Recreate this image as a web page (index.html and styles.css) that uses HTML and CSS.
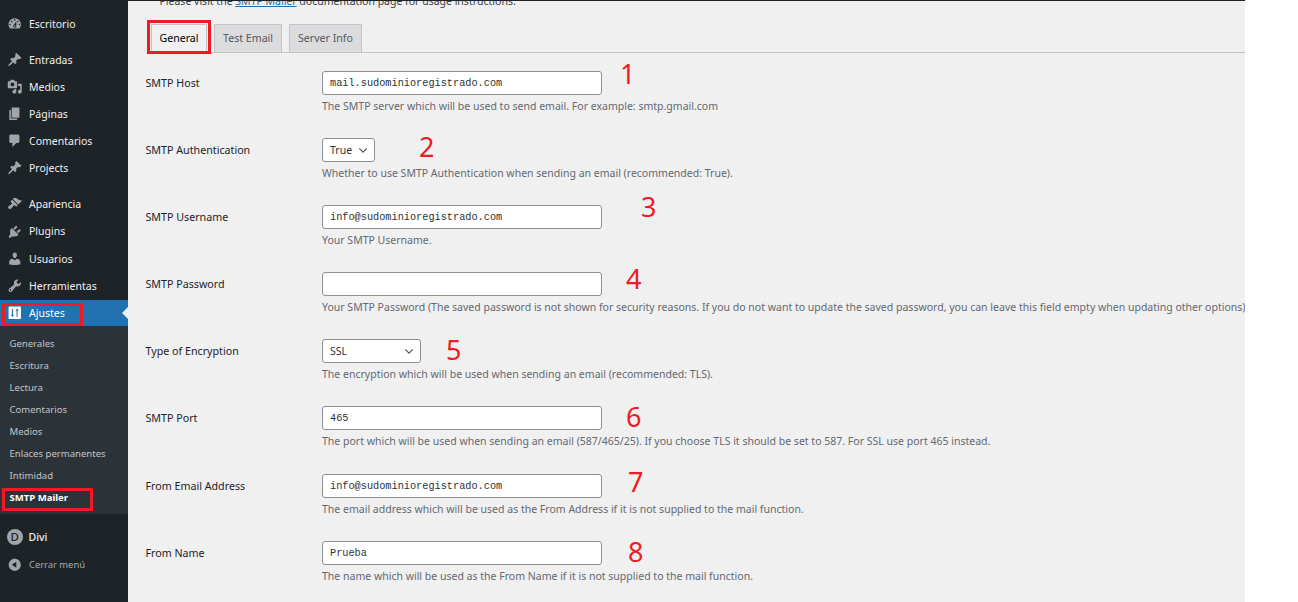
FILE: index.html
```html
<!DOCTYPE html>
<html lang="es">
<head>
<meta charset="utf-8">
<title>SMTP Mailer</title>
<link rel="stylesheet" href="styles.css">
</head>
<body>
<div class="admin">
  <nav class="sidebar">
    <ul class="menu first">
      <li class="item"><svg class="ico" viewBox="0 0 20 20"><path d="M3.76 16h12.48c1.1-1.37 1.76-3.11 1.76-5 0-4.42-3.58-8-8-8s-8 3.58-8 8c0 1.89.66 3.63 1.76 5zM10 4c.55 0 1 .45 1 1s-.45 1-1 1-1-.45-1-1 .45-1 1-1zM6 6c.55 0 1 .45 1 1s-.45 1-1 1-1-.45-1-1 .45-1 1-1zm8 0c.55 0 1 .45 1 1s-.45 1-1 1-1-.45-1-1 .45-1 1-1zm-5.37 5.55L12 7v6c0 1.1-.9 2-2 2s-2-.9-2-2c0-.57.24-1.08.63-1.45zM4 10c.55 0 1 .45 1 1s-.45 1-1 1-1-.45-1-1 .45-1 1-1zm12 0c.55 0 1 .45 1 1s-.45 1-1 1-1-.45-1-1 .45-1 1-1zm-5 3c0-.55-.45-1-1-1s-1 .45-1 1 .45 1 1 1 1-.45 1-1z"/></svg>Escritorio</li>
    </ul>
    <ul class="menu second">
      <li class="item"><svg class="ico" viewBox="0 0 20 20"><path d="M10.44 3.02l1.82-1.82 6.36 6.35-1.83 1.82c-1.05-.68-2.48-.57-3.41.36l-.75.75c-.92.93-1.04 2.35-.35 3.41l-1.83 1.82-2.41-2.41-2.8 2.79c-.42.42-3.38 2.71-3.8 2.29s1.86-3.39 2.28-3.81l2.79-2.79L4.1 9.36l1.83-1.82c1.05.69 2.48.57 3.4-.36l.75-.75c.93-.92 1.05-2.35.36-3.41z"/></svg>Entradas</li>
      <li class="item"><svg class="ico" viewBox="0 0 20 20"><path d="M13 11V4c0-.55-.45-1-1-1h-1.67L9 1H5L3.67 3H2c-.55 0-1 .45-1 1v7c0 .55.45 1 1 1h10c.55 0 1-.45 1-1zM7 4.500c1.380 0 2.500 1.120 2.500 2.500S8.380 9.500 7 9.500 4.500 8.380 4.500 7 5.620 4.500 7 4.500zM14 6h5v10.500c0 1.380-1.120 2.500-2.500 2.500S14 17.880 14 16.500s1.120-2.500 2.500-2.500c.17 0 .34.020.5.050V9h-3V6zm-4 8.050V13h2v3.500c0 1.380-1.120 2.500-2.500 2.500S7 17.880 7 16.500 8.120 14 9.500 14c.17 0 .34.020.5.050z"/></svg>Medios</li>
      <li class="item"><svg class="ico" viewBox="0 0 20 20"><path d="M6 15V2h10v13H6zm-1 1h8v2H3V5h2v11z"/></svg>Páginas</li>
      <li class="item"><svg class="ico" viewBox="0 0 20 20"><path d="M5 2h9c1.100 0 2 .9 2 2v7c0 1.100-.9 2-2 2h-2l-5 5v-5H5c-1.100 0-2-.9-2-2V4c0-1.100.9-2 2-2z"/></svg>Comentarios</li>
      <li class="item"><svg class="ico" viewBox="0 0 20 20"><path d="M10.44 3.02l1.82-1.82 6.36 6.35-1.83 1.82c-1.05-.68-2.48-.57-3.41.36l-.75.75c-.92.93-1.04 2.35-.35 3.41l-1.83 1.82-2.41-2.41-2.8 2.79c-.42.42-3.38 2.71-3.8 2.29s1.86-3.39 2.28-3.81l2.79-2.79L4.1 9.36l1.83-1.82c1.05.69 2.48.57 3.4-.36l.75-.75c.93-.92 1.05-2.35.36-3.41z"/></svg>Projects</li>
    </ul>
    <ul class="menu third">
      <li class="item"><svg class="ico" viewBox="0 0 20 20"><path d="M14.480 11.060L7.410 3.990l1.500-1.500c.5-.56 2.300-.47 3.510.32 1.210.8 1.430 1.280 2.910 2.100 1.180.64 2.450 1.260 4.450.85zm-.71.71L6.700 4.700 4.930 6.470c-.39.39-.39 1.020 0 1.410l1.060 1.060c.39.39.39 1.030 0 1.420-.6.6-1.430 1.110-2.210 1.690-.35.26-.7.53-1.010.84C1.430 13.230.96 14.830 2.130 16s2.770.7 4.110-.64c.31-.31.58-.66.84-1.010.58-.78 1.090-1.610 1.690-2.210.39-.39 1.030-.39 1.420 0l1.060 1.060c.39.39 1.020.39 1.410 0z"/></svg>Apariencia</li>
      <li class="item"><svg class="ico" viewBox="0 0 20 20"><path d="M13.110 4.360L9.870 7.600 8 5.730l3.240-3.240c.35-.34 1.050-.2 1.560.32.52.51.66 1.210.31 1.550zm-8 1.770l.91-1.120 9.010 9.010-1.190.84c-.71.71-2.630 1.160-3.820 1.160H6.140L4.900 17.260c-.59.59-1.540.59-2.120 0-.59-.58-.59-1.530 0-2.120l1.240-1.240v-3.880c0-1.130.4-3.190 1.090-3.890zm7.260 3.970l3.240-3.240c.34-.35 1.040-.21 1.550.31.52.51.66 1.210.31 1.550l-3.240 3.250z"/></svg>Plugins</li>
      <li class="item"><svg class="ico" viewBox="0 0 20 20"><path d="M10 9.250c-2.270 0-2.730-3.440-2.730-3.440C7 4.020 7.820 2 9.970 2c2.160 0 2.980 2.020 2.710 3.810 0 0-.41 3.440-2.680 3.440zm0 2.570L12.720 10c2.390 0 4.520 2.330 4.520 4.530v2.490s-3.650 1.130-7.240 1.130c-3.650 0-7.240-1.130-7.240-1.130v-2.490c0-2.250 1.940-4.480 4.470-4.480z"/></svg>Usuarios</li>
      <li class="item"><svg class="ico" viewBox="0 0 20 20"><path d="M16.680 9.770c-1.340 1.340-3.300 1.670-4.950.99l-5.410 6.520c-.99.99-2.590.99-3.580 0s-.99-2.590 0-3.570l6.520-5.420c-.68-1.650-.35-3.610.99-4.950 1.280-1.280 3.120-1.620 4.720-1.060l-2.890 2.890 2.820 2.820 2.860-2.870c.53 1.580.18 3.390-1.080 4.650zM3.810 16.210c.4.39 1.040.39 1.430 0 .4-.4.4-1.040 0-1.430-.39-.4-1.030-.4-1.430 0-.39.39-.39 1.030 0 1.430z"/></svg>Herramientas</li>
      <li class="item current"><svg class="ico" viewBox="0 0 20 20"><path d="M3 2h14c.6 0 1 .4 1 1v14c0 .6-.4 1-1 1H3c-.6 0-1-.4-1-1V3c0-.6.4-1 1-1zm3.300 3v7.500H4.800L7 15.500l2.200-3H7.700V5H6.300zm6 10h1.400V7.500h1.500L13 4.500l-2.200 3h1.500V15z"/></svg>Ajustes</li>
      <li class="submenu">
        <ul>
          <li>Generales</li>
          <li>Escritura</li>
          <li>Lectura</li>
          <li>Comentarios</li>
          <li>Medios</li>
          <li>Enlaces permanentes</li>
          <li>Intimidad</li>
          <li class="active">SMTP Mailer</li>
        </ul>
      </li>
    </ul>
    <ul class="menu last">
      <li class="item divi"><span class="divi-ico">D</span>Divi</li>
      <li class="item collapse"><svg class="ico" viewBox="0 0 20 20"><path d="M10 2.160c4.330 0 7.840 3.510 7.840 7.840s-3.510 7.840-7.840 7.840S2.160 14.330 2.160 10 5.710 2.160 10 2.160zm2 11.720V6.120L6.180 9.970z"/></svg>Cerrar menú</li>
    </ul>
  </nav>

  <main class="content">
    <p class="notice">Please visit the <a href="#">SMTP Mailer</a> documentation page for usage instructions.</p>
    <div class="tabs">
      <a class="tab tab-on">General</a>
      <a class="tab">Test Email</a>
      <a class="tab">Server Info</a>
    </div>
    <form class="form">
      <div class="row">
        <label class="lbl">SMTP Host</label>
        <div><input class="field" type="text" value="mail.sudominioregistrado.com"><p class="desc">The SMTP server which will be used to send email. For example: smtp.gmail.com</p></div>
      </div>
      <div class="row">
        <label class="lbl">SMTP Authentication</label>
        <div><span class="pick pick-s">True<svg class="chev" viewBox="0 0 12 8"><path d="M1.500 1.500L6 6l4.500-4.500"/></svg></span><p class="desc">Whether to use SMTP Authentication when sending an email (recommended: True).</p></div>
      </div>
      <div class="row">
        <label class="lbl">SMTP Username</label>
        <div><input class="field" type="text" value="info@sudominioregistrado.com"><p class="desc">Your SMTP Username.</p></div>
      </div>
      <div class="row">
        <label class="lbl">SMTP Password</label>
        <div><input class="field" type="text" value=""><p class="desc">Your SMTP Password (The saved password is not shown for security reasons. If you do not want to update the saved password, you can leave this field empty when updating other options).</p></div>
      </div>
      <div class="row">
        <label class="lbl">Type of Encryption</label>
        <div><span class="pick pick-m">SSL<svg class="chev" viewBox="0 0 12 8"><path d="M1.500 1.500L6 6l4.500-4.500"/></svg></span><p class="desc">The encryption which will be used when sending an email (recommended: TLS).</p></div>
      </div>
      <div class="row">
        <label class="lbl">SMTP Port</label>
        <div><input class="field" type="text" value="465"><p class="desc">The port which will be used when sending an email (587/465/25). If you choose TLS it should be set to 587. For SSL use port 465 instead.</p></div>
      </div>
      <div class="row">
        <label class="lbl">From Email Address</label>
        <div><input class="field" type="text" value="info@sudominioregistrado.com"><p class="desc">The email address which will be used as the From Address if it is not supplied to the mail function.</p></div>
      </div>
      <div class="row">
        <label class="lbl">From Name</label>
        <div><input class="field" type="text" value="Prueba"><p class="desc">The name which will be used as the From Name if it is not supplied to the mail function.</p></div>
      </div>
    </form>
  </main>
</div>

<div class="mark box-tab"></div>
<div class="mark box-ajustes"></div>
<div class="mark box-smtp"></div>
<span class="num n1">1</span>
<span class="num n2">2</span>
<span class="num n3">3</span>
<span class="num n4">4</span>
<span class="num n5">5</span>
<span class="num n6">6</span>
<span class="num n7">7</span>
<span class="num n8">8</span>
</body>
</html>
```
FILE: styles.css
```css
* { box-sizing: border-box; }
html, body { margin: 0; padding: 0; height: 100%; background: #fff; overflow: hidden; }
body { font-family: "Noto Sans", "Open Sans", sans-serif; font-size: 10.5px; position: relative; }
ul { list-style: none; margin: 0; padding: 0; }

.admin {
  width: 1245px;
  height: 602px;
  display: flex;
  background: #f0f0f1;
  border-top: 1px solid #1d2327;
}

/* Sidebar */
.sidebar { width: 128px; flex: none; background: #1d2327; color: #f0f0f1; padding-top: 9.500px; }
.menu.first { margin-bottom: 8.700px; }
.menu.second { margin-bottom: 8.800px; }
.item {
  display: flex;
  align-items: center;
  height: 27.100px;
  font-size: 10.500px;
  padding-left: 7px;
  gap: 6.500px;
  position: relative;
}
.third .item { height: 27.300px; }
.ico { width: 15.500px; height: 15.500px; flex: none; fill: #a0a5aa; }
.third .current { background: #2271b1; color: #fff; height: 26px; }
.current .ico { fill: #fff; }
.current::after {
  content: "";
  position: absolute;
  right: 0;
  top: 7px;
  border: 6px solid transparent;
  border-right-color: #f0f0f1;
  border-left: 0;
}
.submenu { background: #2c3338; padding: 7px 0 0; height: 188px; }
.submenu li { height: 22px; line-height: 22px; padding-left: 9.500px; font-size: 9.550px; color: #c3c4c7; }
.submenu li.active { color: #fff; font-weight: 700; }
.menu.last { margin-top: 9.500px; }
.last .item { height: 27.500px; }
.divi { font-weight: 500; }
.divi-ico {
  width: 16.500px;
  height: 16.500px;
  margin: 0 -1px 0 -0.500px;
  flex: none;
  border-radius: 50%;
  background: #a0a5aa;
  color: #1d2327;
  font-size: 11.500px;
  line-height: 16.500px;
  text-align: center;
}
.collapse { color: #a7aaad; font-size: 9.400px; }

/* Content */
.content { flex: 1; min-width: 0; overflow: hidden; padding-left: 17.500px; color: #1d2327; }
.notice { margin: -7px 0 0 14px; height: 15px; line-height: 15px; font-size: 10.500px; color: #3c434a; white-space: nowrap; }
.notice a { color: #2271b1; text-decoration: underline; }
.tabs {
  margin-top: 15px;
  height: 29px;
  display: flex;
  gap: 6.500px;
  padding-left: 5.500px;
  border-bottom: 1px solid #c3c4c7;
  width: 1100px;
}
.tab {
  height: 28px;
  padding: 0 8px 0 8.500px;
  line-height: 26px;
  background: #dcdcde;
  border: 1px solid #c3c4c7;
  border-bottom: 0;
  font-size: 10.600px;
  font-weight: 400;
  color: #50575e;
}
.tab-on { background: #f0f0f1; color: #000; height: 29px; padding: 0 7.500px; }

.form { margin-top: 17.970px; }
.row {
  display: grid;
  grid-template-columns: 176.500px 1fr;
  height: 67.100px;
  min-width: 0;
}
.lbl { line-height: 24px; font-size: 10.700px; color: #1d2327; }
.field {
  display: block;
  width: 280px;
  height: 24px;
  padding: 0 7px;
  border: 1px solid #8c8f94;
  border-radius: 3px;
  background: #fff;
  color: #2c3338;
  font-family: "Liberation Mono", monospace;
  font-size: 10.250px;
  outline: 0;
}
.pick {
  display: flex;
  align-items: center;
  justify-content: space-between;
  height: 24px;
  padding: 0 6px 0 7px;
  border: 1px solid #8c8f94;
  border-radius: 3px;
  background: #fff;
  color: #2c3338;
  font-size: 10.500px;
}
.pick-s { width: 53px; }
.pick-m { width: 99px; }
.chev { width: 10px; height: 7px; fill: none; stroke: #50575e; stroke-width: 1.500; }
.desc { margin: 4px 0 0; line-height: 15px; font-size: 10.530px; color: #646970; white-space: nowrap; }

/* Annotations drawn over the screenshot */
.mark { position: absolute; border: 3px solid #ed1c24; }
.box-tab { left: 147px; top: 20px; width: 64px; height: 34px; }
.box-ajustes { left: 2px; top: 303px; width: 81px; height: 23px; }
.box-smtp { left: 2px; top: 488px; width: 91px; height: 23px; }
.num { position: absolute; font-family: "Noto Sans", sans-serif; font-size: 27px; line-height: 30px; color: #ed1c24; }
.n1 { left: 620px; top: 59px; }
.n2 { left: 419px; top: 132px; }
.n3 { left: 641px; top: 192px; }
.n4 { left: 626px; top: 264px; }
.n5 { left: 446px; top: 335px; }
.n6 { left: 626px; top: 402px; }
.n7 { left: 628px; top: 467px; }
.n8 { left: 628px; top: 537px; }
```
